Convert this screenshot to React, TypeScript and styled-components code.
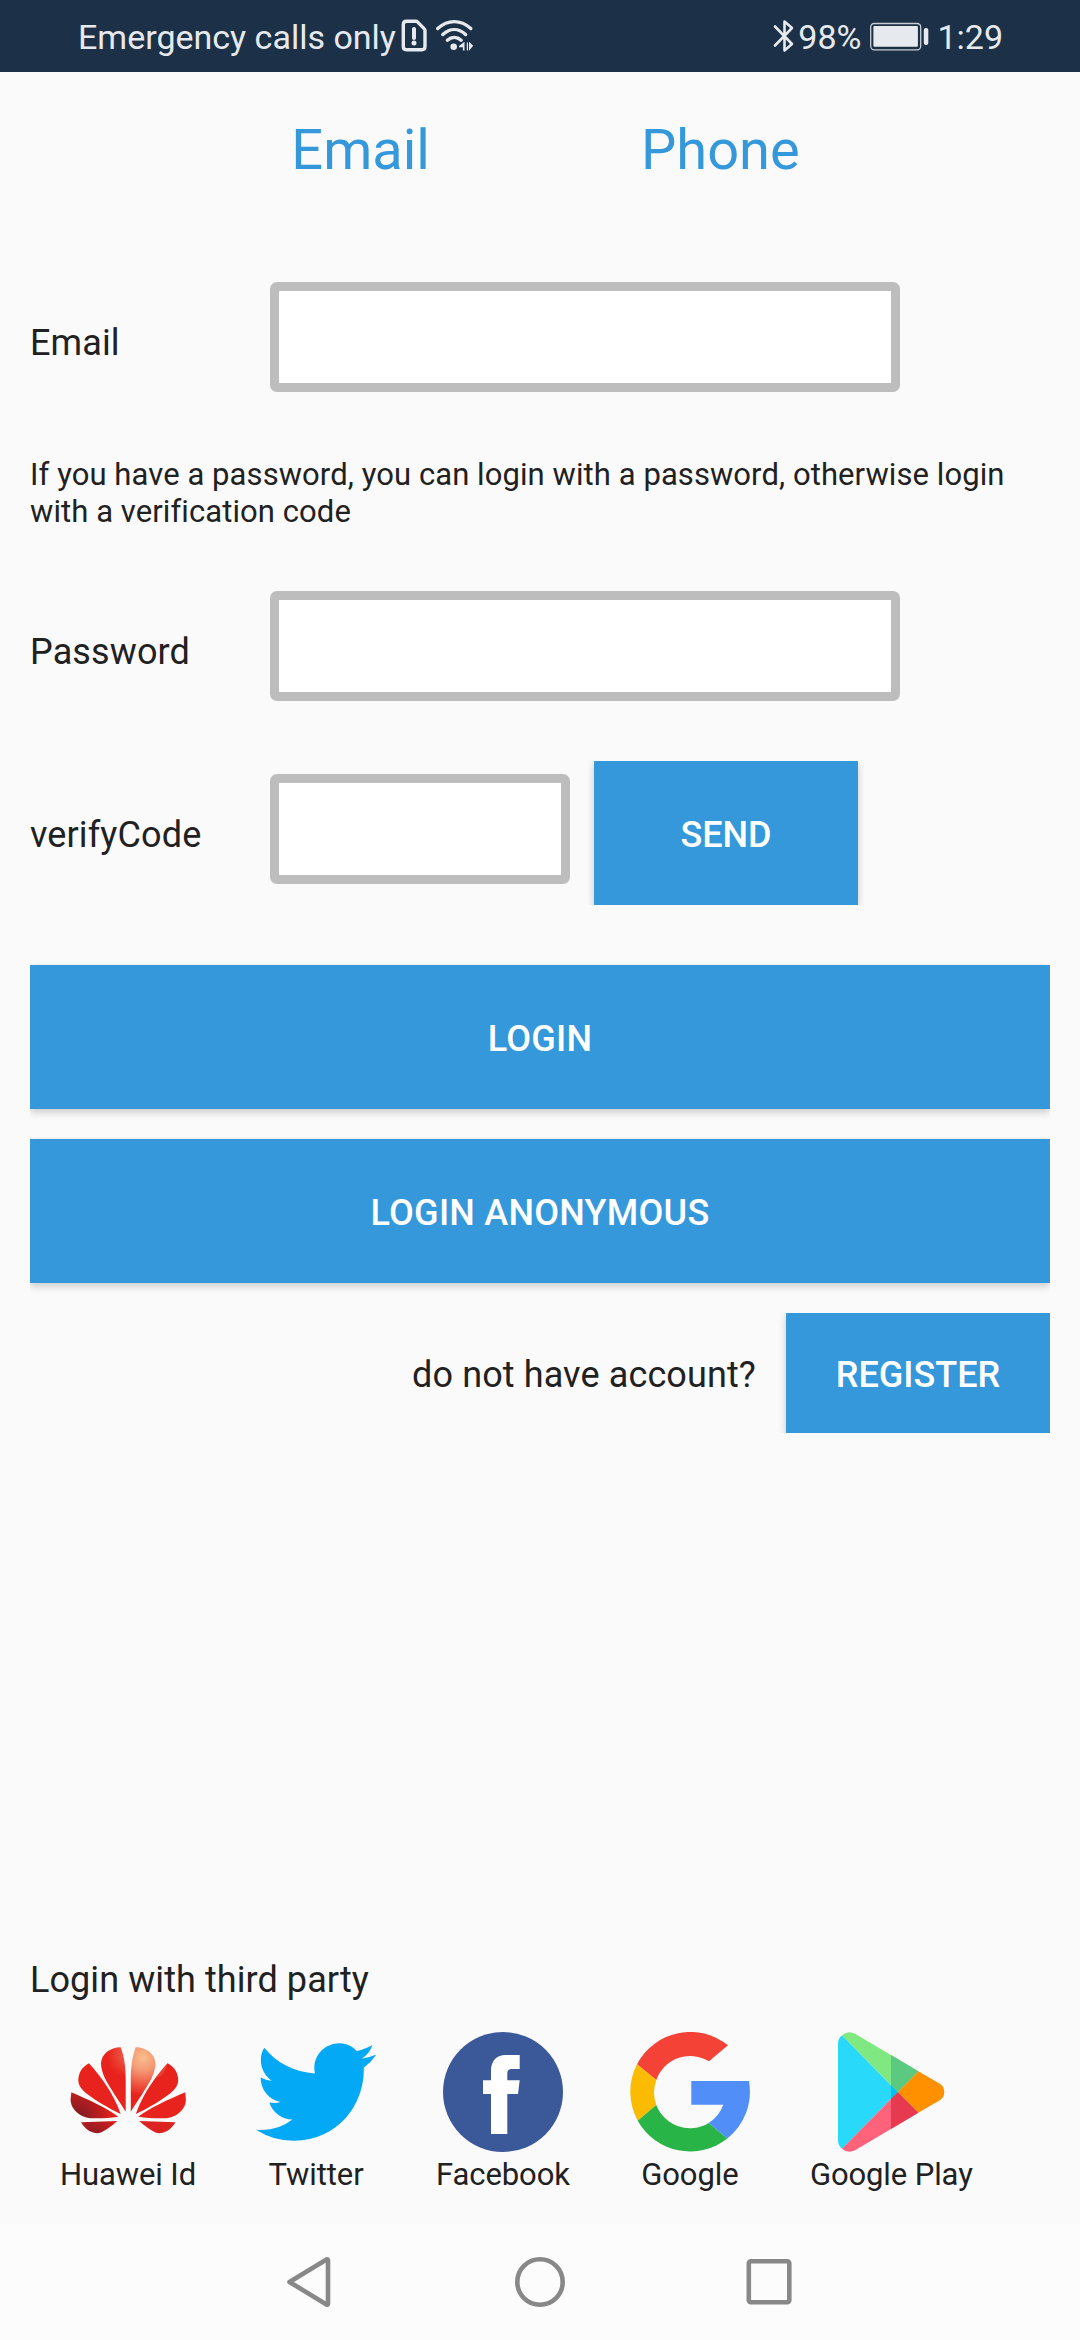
import React from "react";
import styled, { createGlobalStyle } from "styled-components";

const GlobalStyle = createGlobalStyle`
  *, *::before, *::after { box-sizing: border-box; }
  body {
    margin: 0;
    background: #fafafa;
    color: #212121;
    font-family: Roboto, "Noto Sans", sans-serif;
  }
`;

const Screen = styled.div`
  display: flex;
  flex-direction: column;
  width: 1080px;
  height: 2340px;
  overflow: hidden;
`;

const StatusBar = styled.header`
  display: flex;
  justify-content: space-between;
  height: 72px;
  padding: 0 77px 0 78px;
  background: #1c3147;
  color: #e6e9ed;
`;

const StatusGroup = styled.div`
  display: flex;
  align-items: flex-start;
`;

const StatusText = styled.span<{ $gap?: number }>`
  margin-left: ${({ $gap = 0 }) => $gap}px;
  padding-top: 17px;
  font-size: 34px;
  line-height: 40px;
  white-space: nowrap;
`;

const StatusIcon = styled.svg<{ $gap: number }>`
  flex: none;
  height: 72px;
  margin-left: ${({ $gap }) => $gap}px;
`;

const Tabs = styled.nav`
  display: flex;
  justify-content: center;
  gap: 211px;
  height: 210px;
  padding: 45px 0 0 11px;
`;

const Tab = styled.a`
  color: #3498db;
  font-size: 56px;
  line-height: 66px;
  text-decoration: none;
`;

const Form = styled.form`
  display: flex;
  flex-direction: column;
  flex: 1;
  padding: 0 30px;
`;

const FieldRow = styled.div<{ $after: number }>`
  display: flex;
  align-items: center;
  height: 110px;
  margin-bottom: ${({ $after }) => $after}px;
`;

const CodeRow = styled.div`
  display: flex;
  align-items: flex-start;
  height: 144px;
  margin-bottom: 58px;
`;

const CodeField = styled.div`
  display: flex;
  align-items: center;
  height: 110px;
  margin-top: 13px;
`;

const Label = styled.label`
  width: 240px;
  padding-top: 11px;
  font-size: 36px;
  letter-spacing: 0.12px;
  line-height: 42px;
`;

const Input = styled.input<{ $width: number }>`
  width: ${({ $width }) => $width}px;
  height: 110px;
  border: 9px solid #bdbdbd;
  border-radius: 7px;
  background: #fff;
  font: inherit;
  font-size: 36px;
  outline: none;
`;

const Hint = styled.p`
  height: 74px;
  margin: 1px 0 61px;
  font-size: 31px;
  letter-spacing: 0.08px;
  line-height: 37px;
`;

const Button = styled.button<{ $width?: string; $height?: number }>`
  width: ${({ $width = "100%" }) => $width};
  height: ${({ $height = 144 }) => $height}px;
  padding: 4px 0 0;
  border: 0;
  background: #3498db;
  box-shadow: 0 3px 8px rgba(0, 0, 0, 0.2);
  color: #fff;
  font: 500 36px/42px Roboto, "Noto Sans", sans-serif;
`;

const WideButton = styled(Button)`
  letter-spacing: 0.25px;
`;

const SendSlot = styled.div`
  display: flex;
  height: 144px;
  margin-left: 18px;
  padding: 0 6px;
  overflow: hidden;
`;

const WideSlot = styled.div`
  height: 174px;
  padding: 2px 0 28px;
  clip-path: inset(0);
`;

const RegisterRow = styled.div`
  display: flex;
  justify-content: flex-end;
  align-items: center;
  height: 120px;
  margin-top: 2px;
  clip-path: inset(0);
`;

const AccountText = styled.span`
  margin-right: 30px;
  padding-top: 4px;
  font-size: 36px;
  letter-spacing: 0.12px;
  line-height: 42px;
`;

const ThirdParty = styled.section`
  display: flex;
  flex-direction: column;
  height: 265px;
`;

const ThirdPartyTitle = styled.h2`
  margin: 0 0 31px;
  padding-left: 30px;
  font-size: 36px;
  font-weight: 400;
  letter-spacing: 0.08px;
  line-height: 42px;
`;

const Providers = styled.div`
  display: flex;
  gap: 60px;
  padding-left: 60px;
`;

const Provider = styled.a`
  display: flex;
  flex-direction: column;
  align-items: center;
  color: inherit;
  font-size: 31px;
  letter-spacing: -0.1px;
  line-height: 37px;
  white-space: nowrap;
  text-decoration: none;

  svg {
    display: block;
    margin-bottom: 4px;
  }
`;

const NavBar = styled.footer`
  display: flex;
  align-items: center;
  justify-content: space-between;
  height: 116px;
  padding: 0 280px;
  background: #fcfcfc;
`;

const NavIcon = styled.svg`
  width: 60px;
  height: 60px;
  fill: none;
  stroke: #888;
  stroke-width: 4.6;
  stroke-linejoin: round;
`;

const SimIcon = () => (
  <StatusIcon $gap={5} width="27" viewBox="401 0 27 72" fill="none" stroke="currentColor" strokeWidth="3.4">
    <path
      d="M406.5 21.3h9.2c.8 0 1.5.3 2 .8l6.4 6.5c.6.6.9 1.2.9 2v16c0 2-1.2 3.2-3.2 3.2h-15.3c-2 0-3.2-1.2-3.2-3.2V24.500c0-2 1.200-3.200 3.200-3.200z"
      strokeLinejoin="round"
    />
    <path d="M414 29v9" strokeLinecap="round" strokeWidth="4" />
    <circle cx="414" cy="43" r="2.5" fill="currentColor" stroke="none" />
  </StatusIcon>
);

const WifiIcon = () => (
  <StatusIcon $gap={7} width="40" viewBox="435 0 40 72" fill="none" stroke="currentColor" strokeWidth="3.4" strokeLinecap="round">
    <path d="M437.700 28.500C448 19.300 460.500 19.300 470.800 28.500" />
    <path d="M442.800 34.500C450 28 458.500 28 465.600 34.500" />
    <path d="M447.300 40.200C451.500 36.500 457 36.500 461.200 40.200" />
    <circle cx="453.700" cy="46.700" r="3.300" fill="currentColor" stroke="none" />
    <path d="M464.500 41.800v8.700h-1.600v-3.300H459v-1.200zM466.800 42.500h1.200v8h-1.200zM469 41.800l4.200 4-4.200 5z" fill="currentColor" stroke="none" />
  </StatusIcon>
);

const BluetoothIcon = () => (
  <StatusIcon $gap={0} width="22" viewBox="773 0 22 72" fill="none" stroke="currentColor" strokeWidth="2.600">
    <path d="M775 26.500L792 44l-7.500 6.500v-29L792 28 775 45.500" strokeLinecap="round" strokeLinejoin="round" />
  </StatusIcon>
);

const BatteryIcon = () => (
  <StatusIcon $gap={8} width="60" viewBox="870 0 60 72">
    <rect x="871.700" y="23.500" width="50" height="26.300" rx="3.500" fill="none" stroke="currentColor" strokeOpacity=".85" strokeWidth="1.300" />
    <rect x="874.400" y="26" width="44.500" height="20.700" rx="1" fill="currentColor" />
    <rect x="924.800" y="28" width="4.500" height="17" rx="2" fill="currentColor" />
  </StatusIcon>
);

const petals = [
  "M52.700 15.300C56.500 25 57.700 36 57.700 48V79.700C51 69 42 56 37 46.500C34.500 41 33 36 33 31.300C33.500 22 42 15.500 52.700 15.300Z",
  "M21 31.300C34 46 45 61 52.700 82C41 76.500 27 68 18.500 61.500C13 57 10.300 53 10.300 48C10.500 41 14 35 21 31.300Z",
  "M3.300 60.300C20 67.500 39 76 50.300 84.700C40 86.300 33 86.500 24 86.300C12 86 2.500 77 2.600 67.500Z",
  "M13 90.300L49.300 89C44 94 38.500 97.500 33 100.500C28 102.500 19 100.500 13 90.300Z",
];

const HuaweiLogo = () => (
  <svg width="120" height="120" viewBox="0 0 120 120">
    <defs>
      <radialGradient id="hwGlow" gradientUnits="userSpaceOnUse" cx="75" cy="26" r="38">
        <stop offset="0" stopColor="#f9bf8c" />
        <stop offset=".35" stopColor="#f49672" />
        <stop offset="1" stopColor="#e8211a" />
      </radialGradient>
      <radialGradient id="hwSheen" gradientUnits="userSpaceOnUse" cx="62" cy="22" r="24">
        <stop offset="0" stopColor="#ef6a52" />
        <stop offset="1" stopColor="#e8211a" />
      </radialGradient>
      <radialGradient id="hwShade" gradientUnits="userSpaceOnUse" cx="8" cy="86" r="38">
        <stop offset="0" stopColor="#7a1a22" />
        <stop offset=".3" stopColor="#961c22" />
        <stop offset="1" stopColor="#e8211a" />
      </radialGradient>
      <radialGradient id="hwDeep" gradientUnits="userSpaceOnUse" cx="24" cy="104" r="30">
        <stop offset="0" stopColor="#861c26" />
        <stop offset="1" stopColor="#e0201c" />
      </radialGradient>
      <filter id="hwSoft">
        <feGaussianBlur stdDeviation=".7" />
      </filter>
    </defs>
    <g filter="url(#hwSoft)">
      <path d={petals[0]} fill="url(#hwSheen)" />
      <path d={petals[1]} fill="#e8211a" />
      <path d={petals[2]} fill="url(#hwShade)" />
      <path d={petals[3]} fill="url(#hwDeep)" />
      <g transform="translate(120.500 0) scale(-1 1)">
        <path d={petals[1]} fill="#e8211a" />
        <path d={petals[2]} fill="#e8211a" />
        <path d={petals[3]} fill="#dd2420" />
      </g>
      <path
        d="M67.800 15.300C64 25 62.800 36 62.800 48V79.700C69.500 69 78.500 56 83.500 46.500C86 41 87.500 36 87.500 31.300C87 22 78.500 15.500 67.800 15.300Z"
        fill="url(#hwGlow)"
      />
      <path d="M99.500 31.300L88 45C92 46 97 42 99.500 31.300Z" fill="#ee5a45" opacity=".5" />
    </g>
  </svg>
);

const TwitterLogo = () => (
  <svg width="120" height="120" viewBox="0 0 24 24" fill="#03a9f4">
    <path d="M23.953 4.57a10 10 0 01-2.825.775 4.958 4.958 0 002.163-2.723c-.951.555-2.005.959-3.127 1.184a4.92 4.92 0 00-8.384 4.482C7.69 8.095 4.067 6.13 1.64 3.162a4.822 4.822 0 00-.666 2.475c0 1.71.87 3.213 2.188 4.096a4.904 4.904 0 01-2.228-.616v.06a4.923 4.923 0 003.946 4.827 4.996 4.996 0 01-2.212.085 4.936 4.936 0 004.604 3.417 9.867 9.867 0 01-6.102 2.105c-.39 0-.779-.023-1.17-.067a13.995 13.995 0 007.557 2.209c9.053 0 13.998-7.496 13.998-13.985 0-.21 0-.42-.015-.63A9.935 9.935 0 0024 4.59z" />
  </svg>
);

const FacebookLogo = () => (
  <svg width="120" height="120" viewBox="0 0 120 120">
    <circle cx="60" cy="60" r="60" fill="#3b5998" />
    <path
      fill="#fff"
      d="M76.700 23V37H69.500C65.500 37 64.300 38.500 64.300 41.500V48.300H76.700L75 62H64.300V102H48V62H40V48.300H48V38.700C48 28.500 54 23 62.500 23Z"
    />
  </svg>
);

const GoogleLogo = () => (
  <svg width="120" height="120" viewBox="0 0 120 120">
    <path fill="#f44336" d="M98 13.300A60 60 0 0 0 7 32.300L26.300 48A36 36 0 0 1 79 29.300Z" />
    <path fill="#fbbb00" d="M7 32.300A60 60 0 0 0 7.700 88.700L26.300 73A36 36 0 0 1 26.300 48Z" />
    <path fill="#28b446" d="M7.700 88.700A60 60 0 0 0 97.300 106.500L78.700 91A36 36 0 0 1 26.300 73Z" />
    <path fill="#518ef8" d="M61.300 49H119A60 60 0 0 1 97.300 106.500L78.700 91A36 36 0 0 0 93.300 72.700H61.300Z" />
  </svg>
);

const PlayLogo = () => (
  <svg width="120" height="120" viewBox="0 0 120 120">
    <path fill="#28d9f9" d="M11 3.300L66.700 60L11 116.700Q7 113.500 7 108.500V11.500Q7 6.500 11 3.300Z" />
    <path fill="#80e880" d="M11 3.300Q17 -2 24.500 1.900L87.300 39.200L66.700 60Z" />
    <path fill="#ff637c" d="M11 116.700Q17 122 24.500 118.100L87.300 80.800L66.700 60Z" />
    <path fill="#ff9100" d="M87.300 39.200L108 51.200A10 10 0 0 1 108 68.800L87.300 80.800L66.700 60Z" />
    <path fill="#5bc980" d="M60 23.100L87.300 39.200L66.700 60L60 53.200Z" />
    <path fill="#e73a51" d="M60 96.900L87.300 80.800L66.700 60L60 66.800Z" />
    <path fill="#00c0f1" d="M60 53.200L66.700 60L60 66.800Z" />
  </svg>
);

const providers = [
  { name: "Huawei Id", Logo: HuaweiLogo },
  { name: "Twitter", Logo: TwitterLogo },
  { name: "Facebook", Logo: FacebookLogo },
  { name: "Google", Logo: GoogleLogo },
  { name: "Google Play", Logo: PlayLogo },
];

export default function App() {
  return (
    <Screen>
      <GlobalStyle />
      <StatusBar>
        <StatusGroup>
          <StatusText>Emergency calls only</StatusText>
          <SimIcon />
          <WifiIcon />
        </StatusGroup>
        <StatusGroup>
          <BluetoothIcon />
          <StatusText $gap={3}>98%</StatusText>
          <BatteryIcon />
          <StatusText $gap={8}>1:29</StatusText>
        </StatusGroup>
      </StatusBar>

      <Tabs>
        <Tab>Email</Tab>
        <Tab>Phone</Tab>
      </Tabs>

      <Form>
        <FieldRow $after={63}>
          <Label htmlFor="email">Email</Label>
          <Input id="email" $width={630} />
        </FieldRow>
        <Hint>
          If you have a password, you can login with a password, otherwise login with a verification code
        </Hint>
        <FieldRow $after={60}>
          <Label htmlFor="password">Password</Label>
          <Input id="password" type="password" $width={630} />
        </FieldRow>
        <CodeRow>
          <CodeField>
            <Label htmlFor="code">verifyCode</Label>
            <Input id="code" $width={300} />
          </CodeField>
          <SendSlot>
            <Button type="button" $width="264px">SEND</Button>
          </SendSlot>
        </CodeRow>
        <WideSlot>
          <WideButton type="button">LOGIN</WideButton>
        </WideSlot>
        <WideSlot>
          <WideButton type="button">LOGIN ANONYMOUS</WideButton>
        </WideSlot>
        <RegisterRow>
          <AccountText>do not have account?</AccountText>
          <Button type="button" $width="264px" $height={120}>REGISTER</Button>
        </RegisterRow>
      </Form>

      <ThirdParty>
        <ThirdPartyTitle>Login with third party</ThirdPartyTitle>
        <Providers>
          {providers.map(({ name, Logo }) => (
            <Provider key={name}>
              <Logo />
              {name}
            </Provider>
          ))}
        </Providers>
      </ThirdParty>

      <NavBar>
        <NavIcon viewBox="0 0 60 60">
          <path d="M9.500 30L46.500 7.500Q48 7 48 8.500V51.500Q48 53 46.500 52.500Z" />
        </NavIcon>
        <NavIcon viewBox="0 0 60 60">
          <circle cx="30" cy="30" r="22.700" />
        </NavIcon>
        <NavIcon viewBox="0 0 60 60">
          <rect x="8.800" y="9.300" width="40.500" height="41" rx="2" />
        </NavIcon>
      </NavBar>
    </Screen>
  );
}
